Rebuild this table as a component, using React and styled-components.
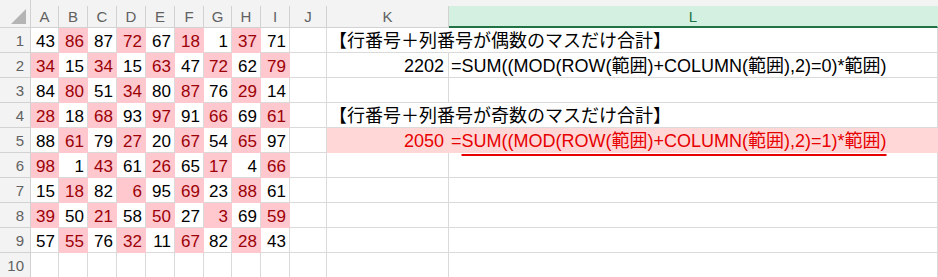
import React from "react";
import styled, { createGlobalStyle } from "styled-components";

const GlobalStyle = createGlobalStyle`
  html, body { margin: 0; padding: 0; background: #ffffff; overflow: hidden; }
  #root { width: 938px; height: 277px; overflow: hidden; }
`;

const GRID = "#dadada";
const HEAD_BG = "#f3f3f3";
const HEAD_LINE = "#d2d2d2";
const PINK = "#ffc7ce";
const DARK_RED = "#9c0006";
const ROW_PINK = "#ffd7d7";
const RED = "#e60000";

const Sheet = styled.div`
  display: grid;
  grid-template-columns: 31px 28px 29px 29px 29px 29px 29px 28px 29px 29px 37px 122px 1fr;
  grid-template-rows: 28px repeat(10, 25px);
  width: 938px;
  font-family: "Liberation Sans", "Noto Sans CJK JP", sans-serif;
`;

const Corner = styled.div`
  background: ${HEAD_BG};
  border-right: 1px solid ${HEAD_LINE};
  border-bottom: 1px solid ${HEAD_LINE};
  display: flex;
  align-items: flex-end;
  justify-content: flex-end;
  padding: 0 4px 3px 0;
  box-sizing: border-box;
`;

const ColHeader = styled.div`
  background: ${HEAD_BG};
  border-bottom: 1px solid ${HEAD_LINE};
  padding-top: 6px;
  box-sizing: border-box;
  display: flex;
`;

const ColLabel = styled.div`
  flex: 1;
  display: flex;
  align-items: center;
  justify-content: center;
  box-sizing: border-box;
  font-size: 15px;
  color: ${(p) => (p.$selected ? "#217346" : "#616161")};
  background: ${(p) => (p.$selected ? "#d3f0e0" : "transparent")};
  border-right: 1px solid ${(p) => (p.$selected ? "#d3f0e0" : HEAD_LINE)};
  border-bottom: ${(p) => (p.$selected ? "2px solid #217346" : "0")};
  margin-bottom: ${(p) => (p.$selected ? "-1px" : "0")};
  padding-top: ${(p) => (p.$selected ? "1px" : "0")};
`;

const RowHeader = styled.div`
  background: ${HEAD_BG};
  border-right: 1px solid ${HEAD_LINE};
  border-bottom: 1px solid ${HEAD_LINE};
  box-sizing: border-box;
  font-size: 15px;
  color: #616161;
  text-align: right;
  padding-right: 6px;
  line-height: 26px;
`;

const Cell = styled.div`
  box-sizing: border-box;
  background: ${(p) => p.$fill || "transparent"};
  border-right: 1px solid ${(p) => p.$fill || GRID};
  border-bottom: 1px solid ${(p) => p.$fill || GRID};
  color: ${(p) => p.$color || "#000"};
  font-size: 17px;
  line-height: 28px;
  height: 25px;
  text-align: ${(p) => p.$align || "right"};
  padding: 0 3px;
  white-space: nowrap;
  overflow: visible;
  grid-column: ${(p) => (p.$span ? `span ${p.$span}` : "auto")};
`;

const TextCell = styled(Cell)`
  font-size: 18px;
  line-height: 27px;
  padding: 0 4px 0 2px;
`;

const Marked = styled.span`
  text-decoration: underline;
  text-decoration-color: ${RED};
  text-decoration-thickness: 2px;
  text-decoration-skip-ink: none;
  text-underline-offset: 7px;
`;

const data = [
  [43, 86, 87, 72, 67, 18, 1, 37, 71],
  [34, 15, 34, 15, 63, 47, 72, 62, 79],
  [84, 80, 51, 34, 80, 87, 76, 29, 14],
  [28, 18, 68, 93, 97, 91, 66, 69, 61],
  [88, 61, 79, 27, 20, 67, 54, 65, 97],
  [98, 1, 43, 61, 26, 65, 17, 4, 66],
  [15, 18, 82, 6, 95, 69, 23, 88, 61],
  [39, 50, 21, 58, 50, 27, 3, 69, 59],
  [57, 55, 76, 32, 11, 67, 82, 28, 43],
];

const cols = ["A", "B", "C", "D", "E", "F", "G", "H", "I", "J", "K", "L"];

function KL(row) {
  switch (row) {
    case 1:
      return (
        <TextCell $span={2} $align="left">
          【行番号＋列番号が偶数のマスだけ合計】
        </TextCell>
      );
    case 2:
      return (
        <>
          <TextCell>2202</TextCell>
          <TextCell $align="left">=SUM((MOD(ROW(範囲)+COLUMN(範囲),2)=0)*範囲)</TextCell>
        </>
      );
    case 4:
      return (
        <TextCell $span={2} $align="left">
          【行番号＋列番号が奇数のマスだけ合計】
        </TextCell>
      );
    case 5:
      return (
        <>
          <TextCell $fill={ROW_PINK} $color={RED}>2050</TextCell>
          <TextCell $fill={ROW_PINK} $color={RED} $align="left">
            =<Marked>SUM((MOD(ROW(範囲)+COLUMN(範囲),2)=1)*範囲)</Marked>
          </TextCell>
        </>
      );
    default:
      return (
        <>
          <TextCell />
          <TextCell />
        </>
      );
  }
}

export default function App() {
  const rows = [];
  for (let r = 1; r <= 10; r++) {
    const vals = data[r - 1];
    rows.push(
      <React.Fragment key={r}>
        <RowHeader>{r}</RowHeader>
        {Array.from({ length: 9 }, (_, c) => {
          const odd = (r + c + 1) % 2 === 1 && vals;
          return (
            <Cell key={c} $fill={odd ? PINK : undefined} $color={odd ? DARK_RED : undefined}>
              {vals ? vals[c] : ""}
            </Cell>
          );
        })}
        <Cell />
        {KL(r)}
      </React.Fragment>
    );
  }

  return (
    <>
      <GlobalStyle />
      <Sheet>
        <Corner>
          <svg width="15" height="15" viewBox="0 0 15 15">
            <polygon points="15,0 15,15 0,15" fill="#b4b4b4" />
          </svg>
        </Corner>
        {cols.map((c) => (
          <ColHeader key={c}>
            <ColLabel $selected={c === "L"}>{c}</ColLabel>
          </ColHeader>
        ))}
        {rows}
      </Sheet>
    </>
  );
}
